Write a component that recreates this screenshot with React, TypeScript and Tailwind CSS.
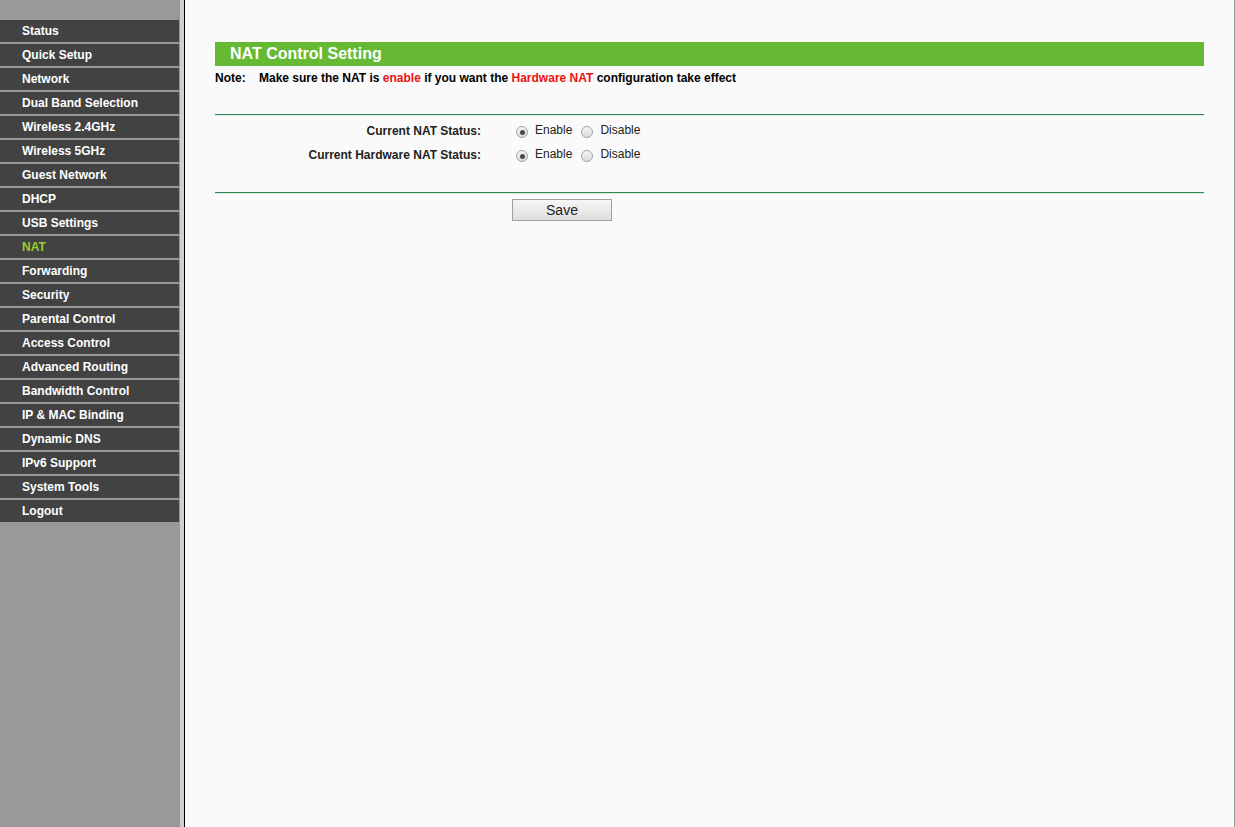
import React from "react";

const menu = [
  "Status",
  "Quick Setup",
  "Network",
  "Dual Band Selection",
  "Wireless 2.4GHz",
  "Wireless 5GHz",
  "Guest Network",
  "DHCP",
  "USB Settings",
  "NAT",
  "Forwarding",
  "Security",
  "Parental Control",
  "Access Control",
  "Advanced Routing",
  "Bandwidth Control",
  "IP & MAC Binding",
  "Dynamic DNS",
  "IPv6 Support",
  "System Tools",
  "Logout",
];

const Radio: React.FC<{ checked?: boolean; label: string }> = ({ checked, label }) => (
  <label className="flex items-center">
    <span className="flex h-[12px] w-[12px] translate-y-[1px] items-center justify-center rounded-full border border-[#a6a6a6] bg-gradient-to-b from-[#f4f4f4] to-[#dcdcdc]">
      {checked && <span className="h-[5px] w-[5px] rounded-full bg-[#4a4a4a]" />}
    </span>
    <span className="ml-[7px] -translate-y-[1px] text-[12px] text-[#222]">{label}</span>
  </label>
);

const StatusRow: React.FC<{ label: string }> = ({ label }) => (
  <div className="flex h-[24px] items-center">
    <div className="w-[266px] text-right text-[12px] font-bold text-[#222]">{label}</div>
    <div className="ml-[35px] flex items-center gap-[9px]">
      <Radio checked label="Enable" />
      <Radio label="Disable" />
    </div>
  </div>
);

export default function App() {
  return (
    <div className="flex h-[827px] w-[1235px] overflow-hidden font-['Liberation_Sans',Arial,sans-serif]">
      <div className="w-[180px] shrink-0 bg-[#999999] pt-[20px]">
        <div className="flex flex-col gap-[2px]">
          {menu.map((item) => (
            <div
              key={item}
              className={
                "h-[22px] w-[179px] bg-[#424242] pl-[22px] text-[12px] font-bold leading-[22px] " +
                (item === "NAT" ? "text-[#9acd32]" : "text-white")
              }
            >
              {item}
            </div>
          ))}
        </div>
      </div>
      <div className="w-[4px] shrink-0 bg-[#d0d0d0]" />
      <div className="w-[1px] shrink-0 bg-black" />

      <div className="flex-1 border-r border-[#999] bg-[#fafafa] px-[30px] pt-[42px]">
        <div className="h-[24px] bg-[#66b933] pl-[15px] text-[16px] font-bold leading-[24px] text-white">
          NAT Control Setting
        </div>
        <div className="mt-[5px] flex text-[12px] font-bold leading-[14px] text-black">
          <span className="w-[44px]">Note:</span>
          <span>
            Make sure the NAT is <span className="text-[#ee1111]">enable</span> if you want the{" "}
            <span className="text-[#ee1111]">Hardware NAT</span> configuration take effect
          </span>
        </div>

        <div className="mt-[29px] h-[1px] bg-[#2e8a55]" />
        <div className="h-[1px] bg-[#d8e8dc]" />

        <div className="mt-[3px]">
          <StatusRow label="Current NAT Status:" />
          <StatusRow label="Current Hardware NAT Status:" />
        </div>

        <div className="mt-[25px] h-[1px] bg-[#2e8a55]" />
        <div className="h-[1px] bg-[#d8e8dc]" />

        <button className="ml-[297px] mt-[5px] h-[22px] w-[100px] border border-[#a0a0a0] bg-gradient-to-b from-[#f6f6f6] to-[#dedede] text-[14px] leading-[20px] text-[#222]">
          Save
        </button>
      </div>
    </div>
  );
}
